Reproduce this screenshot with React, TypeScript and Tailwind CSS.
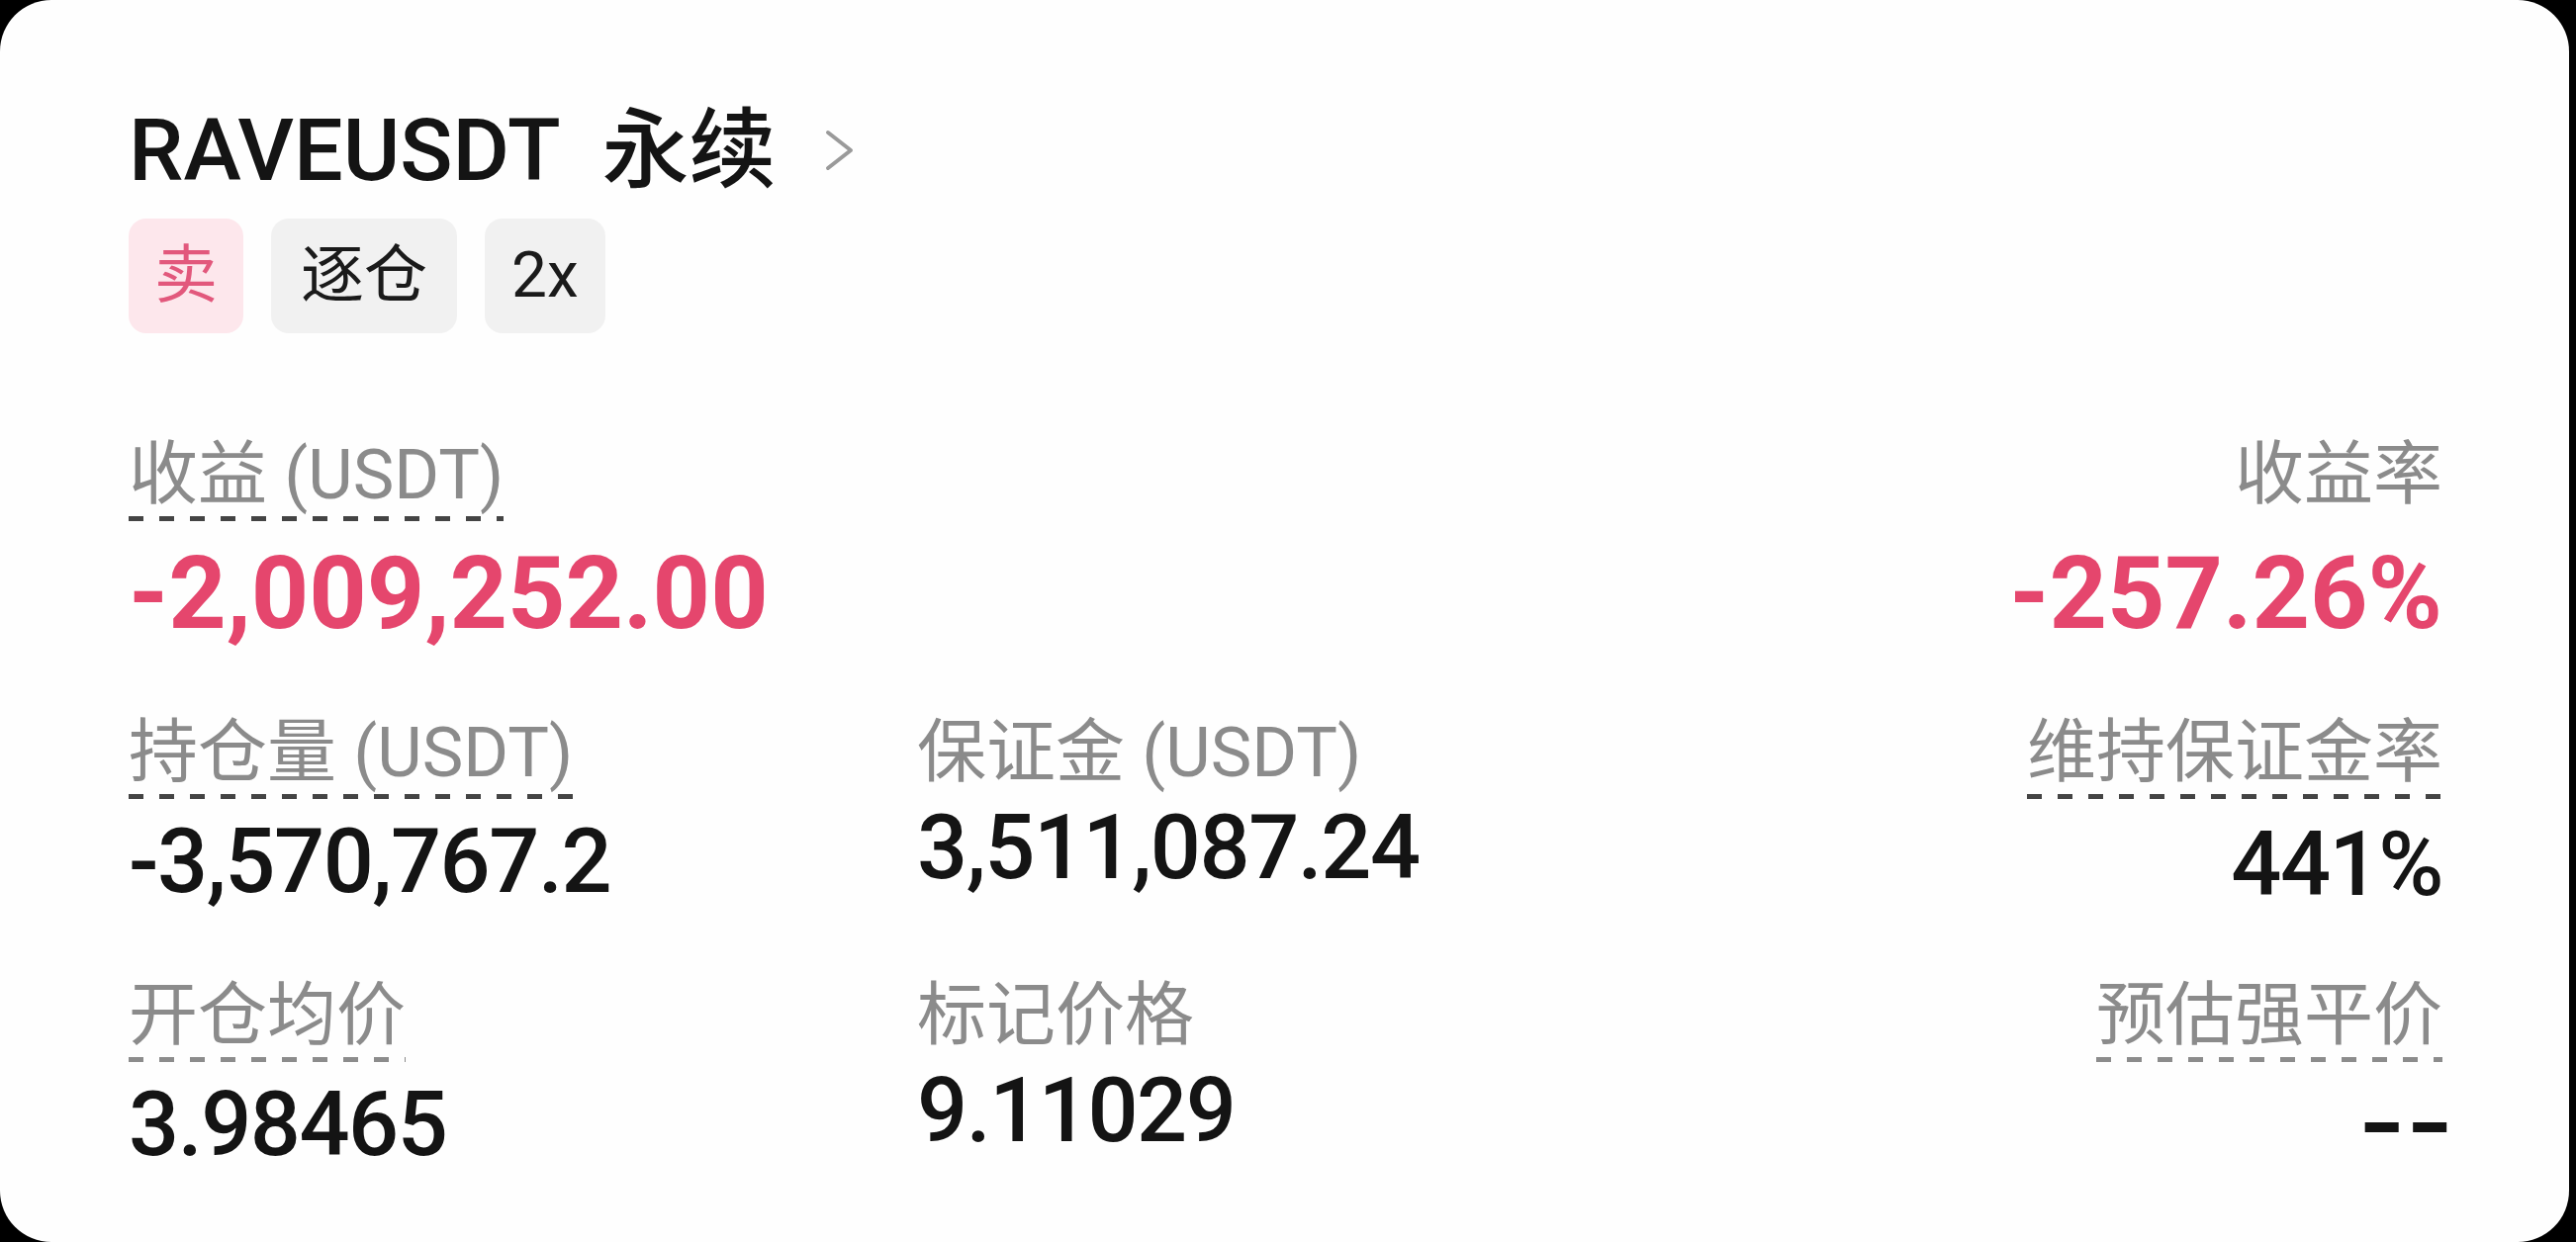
import React from "react";

const FONT = "font-['Roboto','Noto_Sans_CJK_SC',sans-serif]";

type CellProps = {
  label: string;
  value: React.ReactNode;
  dashed?: boolean;
  dashTone?: "dark" | "light";
  right?: boolean;
  valueGap: string;
  valueClass: string;
};

function Cell({ label, value, dashed, dashTone = "dark", right, valueGap, valueClass }: CellProps) {
  return (
    <div className={`flex flex-col ${right ? "items-end text-right" : "items-start"}`}>
      <div className="inline-flex flex-col">
        <span className="text-[70px] leading-none text-[#8b8b8b] whitespace-nowrap">{label}</span>
        {dashed && (
          <div
            className={
              dashTone === "dark"
                ? "mt-[7px] h-[5px] w-full bg-[repeating-linear-gradient(90deg,#444_0_15px,transparent_15px_31px)]"
                : "mt-[7px] h-[5px] w-full bg-[repeating-linear-gradient(90deg,#8c8c8c_0_15px,transparent_15px_31px)]"
            }
          />
        )}
      </div>
      <div className={`${valueGap} leading-none whitespace-nowrap ${valueClass}`}>{value}</div>
    </div>
  );
}

const NUM = "text-[90px] font-medium tracking-[-1.5px] text-[#141414]";
const RED = "text-[102px] font-bold text-[#e5466d]";

export default function App() {
  return (
    <div className={`w-[2604px] h-[1256px] bg-black overflow-hidden ${FONT}`}>
      <div className="w-[2597px] h-[1256px] bg-[#fefefe] rounded-[52px] pl-[130px] pr-[128px] pt-[108px]">
        {/* header */}
        <div className="flex items-center">
          <h1 className="flex text-[88px] leading-none font-medium text-[#141414] whitespace-nowrap">
            <span>RAVEUSDT</span>
            <span className="ml-[42px]">永续</span>
          </h1>
          <svg width="32" height="44" viewBox="0 0 32 44" className="ml-[48px]" fill="none">
            <polyline
              points="4,4 27,22 4,40"
              stroke="#9a9a9a"
              strokeWidth="4"
              strokeLinecap="round"
              strokeLinejoin="round"
            />
          </svg>
        </div>

        <div className="mt-[25px] flex gap-[28px] text-[64px] leading-none">
          <span className="h-[116px] px-[26px] flex items-center rounded-[18px] bg-[#fde7ec] text-[#e2587c]">
            卖
          </span>
          <span className="h-[116px] px-[30px] flex items-center rounded-[18px] bg-[#f1f1f1] text-[#1a1a1a]">
            逐仓
          </span>
          <span className="h-[116px] px-[27px] flex items-center rounded-[18px] bg-[#f1f1f1] text-[#1a1a1a]">
            2x
          </span>
        </div>

        {/* row 1 */}
        <div className="mt-[108px] grid grid-cols-[797px_1fr_1fr] items-start">
          <Cell label="收益 (USDT)" value="-2,009,252.00" dashed valueGap="mt-[22px]" valueClass={RED} />
          <div />
          <Cell label="收益率" value="-257.26%" right valueGap="mt-[34px]" valueClass={RED} />
        </div>

        {/* row 2 */}
        <div className="mt-[75px] grid grid-cols-[797px_1fr_1fr] items-start">
          <Cell label="持仓量 (USDT)" value="-3,570,767.2" dashed valueGap="mt-[19px]" valueClass={NUM} />
          <Cell label="保证金 (USDT)" value="3,511,087.24" valueGap="mt-[17px]" valueClass={NUM} />
          <Cell label="维持保证金率" value="441%" dashed right valueGap="mt-[22px]" valueClass={NUM} />
        </div>

        {/* row 3 */}
        <div className="mt-[72px] grid grid-cols-[797px_1fr_1fr] items-start">
          <Cell
            label="开仓均价"
            value="3.98465"
            dashed
            dashTone="light"
            valueGap="mt-[19px]"
            valueClass={NUM}
          />
          <Cell label="标记价格" value="9.11029" valueGap="mt-[17px]" valueClass={NUM} />
          <Cell
            label="预估强平价"
            value={<span className="inline-block origin-right scale-x-[1.37] translate-x-[12px]">--</span>}
            dashed
            dashTone="light"
            right
            valueGap="mt-[19px]"
            valueClass="text-[90px] font-bold text-[#141414]"
          />
        </div>
      </div>
    </div>
  );
}
